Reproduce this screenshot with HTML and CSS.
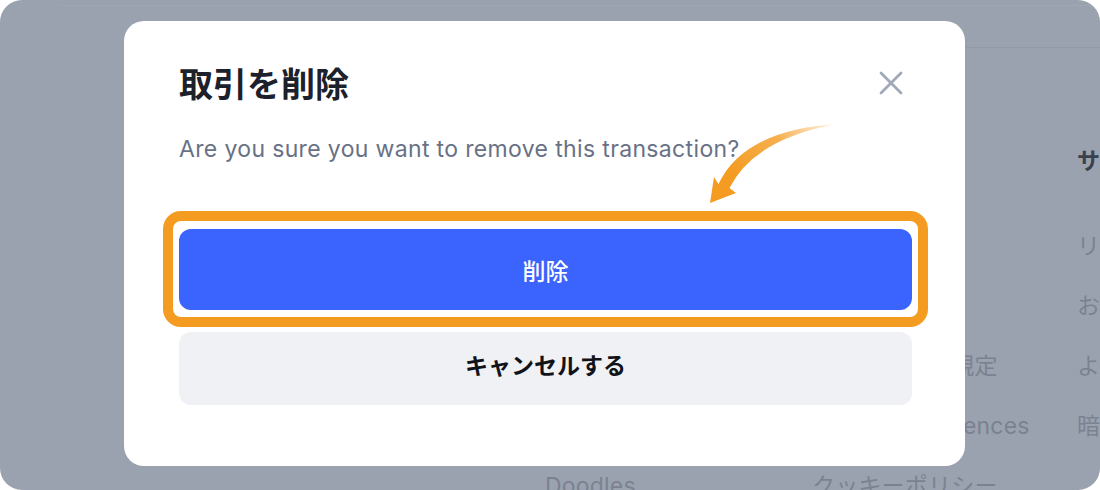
FILE: index.html
```html
<!DOCTYPE html>
<html lang="ja">
<head>
<meta charset="utf-8">
<title>取引を削除</title>
<link rel="stylesheet" href="styles.css">
</head>
<body>
<div class="screen">
  <div class="topline"></div>
  <div class="sideline"></div>
  <footer class="footer">
    <div class="col">
      <h4 class="col-title">リソース</h4>
      <ul class="links">
        <li>ブログ</li>
        <li>ヘルプセンター</li>
        <li>コミュニティ</li>
        <li>テンプレート</li>
        <li>Doodles</li>
      </ul>
    </div>
    <div class="col">
      <h4 class="col-title">法的事項</h4>
      <ul class="links">
        <li>利用規約</li>
        <li>プライバシー</li>
        <li>個人情報保護規定</li>
        <li>Cookie Preferences</li>
        <li>クッキーポリシー</li>
      </ul>
    </div>
    <div class="col">
      <h4 class="col-title dark">サポート</h4>
      <ul class="links">
        <li>リリースノート</li>
        <li>お問い合わせ</li>
        <li>よくある質問</li>
        <li>暗号化について</li>
      </ul>
    </div>
  </footer>

  <div class="modal" role="dialog">
    <div class="modal-head">
      <h2 class="modal-title">取引を削除</h2>
      <button class="close" aria-label="閉じる">
        <svg viewBox="0 0 24 24" width="24" height="24" fill="none" stroke="currentColor" stroke-width="2.8" stroke-linecap="round"><path d="M2 2L22 22M22 2L2 22"/></svg>
      </button>
    </div>
    <p class="modal-text">Are you sure you want to remove this transaction?</p>
    <div class="actions">
      <div class="highlight">
        <button class="btn btn-danger">削除</button>
      </div>
      <button class="btn btn-cancel">キャンセルする</button>
    </div>
  </div>

  <svg class="arrow" viewBox="0 0 150 100" width="150" height="100">
    <defs>
      <linearGradient id="ag" gradientUnits="userSpaceOnUse" x1="137" y1="9" x2="35" y2="65">
        <stop offset="0" stop-color="#f7b860" stop-opacity="0.15"/>
        <stop offset="0.5" stop-color="#f5a73c" stop-opacity="0.9"/>
        <stop offset="1" stop-color="#f49b22"/>
      </linearGradient>
    </defs>
    <path d="M137,9 Q44,15 18.5,69 L14,62 L10,88 L36,78 L29.5,73 Q54,24 137,9 Z" fill="url(#ag)"/>
  </svg>
</div>
</body>
</html>
```
FILE: styles.css
```css
* { box-sizing: border-box; }
html, body { margin: 0; padding: 0; background: #ffffff; }
body {
  width: 1100px;
  height: 490px;
  overflow: hidden;
  font-family: Inter, "Noto Sans CJK JP", sans-serif;
}
.screen {
  position: relative;
  width: 1100px;
  height: 490px;
  border-radius: 22px;
  background: #9ba2af;
  overflow: hidden;
}
.topline {
  height: 6px;
  margin-left: 60px;
  border-bottom: 1px solid rgba(255,255,255,0.06);
}
.sideline {
  height: 1px;
  margin-top: 41px;
  margin-left: 900px;
  background: rgba(80,90,110,0.1);
}
.footer {
  display: grid;
  grid-template-columns: 267px 265px 266px;
  margin-left: 545px;
  padding-top: 93px;
  white-space: nowrap;
}
.col-title {
  margin: 0;
  height: 40px;
  line-height: 40px;
  font-size: 23px;
  font-weight: 700;
  color: #7c8493;
}
.col-title.dark { color: #3a414e; }
.links {
  list-style: none;
  margin: 35px 0 0;
  padding: 0;
}
.links li {
  height: 60px;
  line-height: 60px;
  font-size: 23px;
  letter-spacing: 0.2px;
  color: #7a8291;
}
.modal {
  position: absolute;
  left: 124px;
  top: 21px;
  width: 841px;
  height: 445px;
  background: #ffffff;
  border-radius: 20px;
  padding: 42px 53px 0 55px;
}
.modal-head {
  display: flex;
  align-items: center;
  justify-content: space-between;
}
.modal-title {
  margin: 0;
  font-size: 34px;
  line-height: 40px;
  font-weight: 700;
  color: #1c212b;
  font-family: "Noto Sans CJK JP", sans-serif;
}
.close {
  border: 0;
  background: none;
  padding: 0;
  margin-right: 9px;
  width: 24px;
  height: 24px;
  color: #a0a9b8;
  display: flex;
}
.modal-text {
  margin: 31px 0 0;
  font-size: 23px;
  letter-spacing: 0.35px;
  line-height: 30px;
  color: #687185;
}
.actions {
  margin-top: 65px;
  display: flex;
  flex-direction: column;
  gap: 22px;
}
.highlight { position: relative; }
.highlight::after {
  content: "";
  position: absolute;
  left: -16px;
  right: -16px;
  top: -18px;
  bottom: -17px;
  border: 10px solid #f49b22;
  border-radius: 18px;
  pointer-events: none;
}
.btn {
  display: flex;
  align-items: center;
  justify-content: center;
  width: 100%;
  border: 0;
  border-radius: 12px;
  font-family: "Noto Sans CJK JP", sans-serif;
}
.btn-danger {
  height: 81px;
  background: #3b63fd;
  color: #ffffff;
  font-size: 23px;
  font-weight: 500;
}
.btn-cancel {
  height: 73px;
  padding-bottom: 10px;
  background: #f0f1f4;
  color: #111318;
  font-size: 23px;
  font-weight: 700;
}
.arrow {
  position: absolute;
  left: 700px;
  top: 115px;
}
```
